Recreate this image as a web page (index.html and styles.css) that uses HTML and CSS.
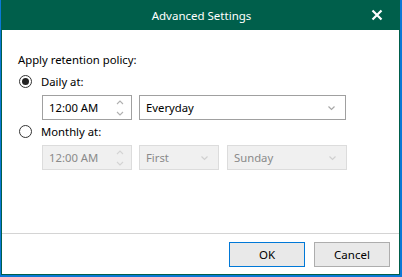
FILE: index.html
```html
<!DOCTYPE html>
<html>
<head>
<meta charset="utf-8">
<link rel="stylesheet" href="styles.css">
</head>
<body>
<div class="window">
  <div class="titlebar">
    <span class="title">Advanced Settings</span>
    <span class="close">
      <svg width="12" height="12" viewBox="0 0 12 12"><path d="M1.5 1.5 L10.5 10.5 M10.5 1.5 L1.5 10.5" stroke="#fff" stroke-width="2.2" fill="none"/></svg>
    </span>
  </div>
  <div class="content">
    <div class="label">Apply retention policy:</div>
    <div class="radio-row">
      <span class="radio checked"><span class="dot"></span></span>
      <span class="radio-label">Daily at:</span>
    </div>
    <div class="fields">
      <div class="timebox">
        <span class="time">12:00 AM</span>
        <span class="spin">
          <svg width="10" height="24" viewBox="0 0 10 24"><path d="M2 8 L5 5 L8 8" stroke="#b0b0b0" stroke-width="1.1" fill="none"/><path d="M2 16 L5 19 L8 16" stroke="#b0b0b0" stroke-width="1.1" fill="none"/></svg>
        </span>
      </div>
      <div class="combo wide">
        <span>Everyday</span>
        <svg class="chev" width="9" height="6" viewBox="0 0 9 6"><path d="M1.5 1.5 L4.5 4.5 L7.5 1.5" stroke="#a8a8a8" stroke-width="1.2" fill="none"/></svg>
      </div>
    </div>
    <div class="radio-row second">
      <span class="radio"></span>
      <span class="radio-label">Monthly at:</span>
    </div>
    <div class="fields disabled">
      <div class="timebox">
        <span class="time">12:00 AM</span>
        <span class="spin">
          <svg width="10" height="24" viewBox="0 0 10 24"><path d="M2 8 L5 5 L8 8" stroke="#d4d4d4" stroke-width="1.1" fill="none"/><path d="M2 16 L5 19 L8 16" stroke="#d4d4d4" stroke-width="1.1" fill="none"/></svg>
        </span>
      </div>
      <div class="combo first">
        <span>First</span>
        <svg class="chev" width="9" height="6" viewBox="0 0 9 6"><path d="M1.5 1.5 L4.5 4.5 L7.5 1.5" stroke="#d0d0d0" stroke-width="1.2" fill="none"/></svg>
      </div>
      <div class="combo day">
        <span>Sunday</span>
        <svg class="chev" width="9" height="6" viewBox="0 0 9 6"><path d="M1.5 1.5 L4.5 4.5 L7.5 1.5" stroke="#d0d0d0" stroke-width="1.2" fill="none"/></svg>
      </div>
    </div>
  </div>
  <div class="footer">
    <button class="btn primary">OK</button>
    <button class="btn">Cancel</button>
  </div>
</div>
</body>
</html>
```
FILE: styles.css
```css
html, body {
  margin: 0;
  padding: 0;
}
body {
  background: #0b78d6;
  width: 402px;
  height: 277px;
  font-family: "Noto Sans", "Open Sans", sans-serif;
  font-size: 11.3px;
  color: #000;
  overflow: hidden;
}
.window {
  margin-left: 1px;
  width: 397px;
  height: 274px;
  border: 1px solid #005f4b;
  border-top: none;
  background: #fff;
  display: flex;
  flex-direction: column;
}
.titlebar {
  height: 30px;
  background: #005f4b;
  color: #fff;
  display: flex;
  align-items: center;
  justify-content: center;
  position: relative;
  font-size: 11.5px;
}
.title {
  margin-left: 2px;
}
.close {
  position: absolute;
  right: 16px;
  top: 9px;
  width: 12px;
  height: 12px;
  display: flex;
}
.content {
  flex: 1;
  padding: 22px 0 0 16px;
  display: flex;
  flex-direction: column;
}
.label {
  height: 16px;
  line-height: 16px;
}
.radio-row {
  display: flex;
  align-items: center;
  height: 16px;
  margin-top: 5px;
}
.radio-row.second {
  margin-top: 3px;
}
.radio {
  width: 13px;
  height: 13px;
  border: 1px solid #333;
  border-radius: 50%;
  box-sizing: border-box;
  display: flex;
  align-items: center;
  justify-content: center;
  margin-left: 1px;
  background: #fff;
}
.radio.checked .dot {
  width: 7px;
  height: 7px;
  border-radius: 50%;
  background: #222;
}
.radio-label {
  margin-left: 9px;
}
.fields {
  display: flex;
  margin-left: 24px;
  margin-top: 6px;
  gap: 6px;
}
.timebox {
  width: 90px;
  height: 25px;
  border: 1px solid #a0a0a0;
  box-sizing: border-box;
  display: flex;
  align-items: center;
  justify-content: space-between;
  padding-left: 6px;
}
.spin {
  width: 23px;
  height: 23px;
  display: flex;
  align-items: center;
  justify-content: center;
}
.combo {
  height: 25px;
  border: 1px solid #a0a0a0;
  box-sizing: border-box;
  display: flex;
  align-items: center;
  justify-content: space-between;
  padding: 0 9px 0 6px;
}
.combo.wide { width: 207px; margin-left: 1px; }
.combo.first { width: 80px; margin-left: 1px; }
.combo.day { width: 120px; margin-left: 2px; }
.disabled .timebox,
.disabled .combo {
  background: #f0f0f0;
  border-color: #dcdcdc;
  color: #8a8a8a;
}
.footer {
  height: 41px;
  border-top: 1px solid #d4d4d4;
  display: flex;
  justify-content: flex-end;
  align-items: flex-start;
  padding: 8px 9px 0 0;
  gap: 9px;
  box-sizing: border-box;
}
.btn {
  width: 76px;
  height: 25px;
  background: #e9e9e9;
  border: 1px solid #adadad;
  font-family: inherit;
  font-size: 11.5px;
  color: #000;
  padding: 0;
}
.btn.primary {
  border-color: #0078d7;
}
```
